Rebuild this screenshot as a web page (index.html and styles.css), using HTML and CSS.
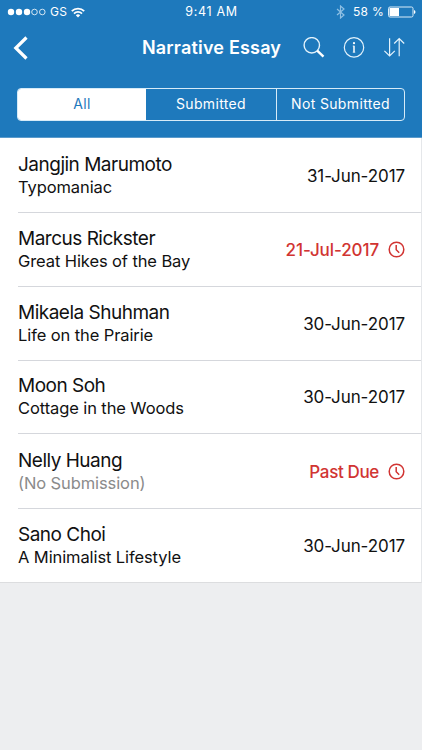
FILE: index.html
```html
<!DOCTYPE html>
<html lang="en">
<head>
<meta charset="utf-8">
<title>Narrative Essay</title>
<link rel="stylesheet" href="styles.css">
</head>
<body>
<header class="header">
  <div class="status">
    <div class="status-left">
      <svg width="40" height="8" viewBox="0 0 40 8"><g fill="#fff"><circle cx="4" cy="4" r="3.2"/><circle cx="12" cy="4" r="3.2"/><circle cx="20" cy="4" r="3.2"/></g><g fill="none" stroke="#fff" stroke-width=".8"><circle cx="27.5" cy="4" r="2.8"/><circle cx="35.3" cy="4" r="2.8"/></g></svg>
      <span class="carrier">GS</span>
      <svg width="14" height="11" viewBox="0 0 14 11"><g fill="none" stroke="#fff" stroke-width="1.8"><path d="M.8 4.1a8.8 8.8 0 0 1 12.4 0M3 6.6a5.7 5.7 0 0 1 8 0"/></g><path fill="#fff" d="M4.8 8.3a3.2 3.2 0 0 1 4.4 0L7 10.6z"/></svg>
    </div>
    <div class="time">9:41 AM</div>
    <div class="status-right">
      <svg width="9" height="14" viewBox="0 0 9 14"><path d="M1 4l7 6-3.5 3V1L8 4l-7 6" fill="none" stroke="#8fc0e4" stroke-width="1.2"/></svg>
      <span class="percent">58 %</span>
      <svg width="28" height="12" viewBox="0 0 28 12"><rect x=".5" y="1" width="24.5" height="10" rx="1.5" fill="none" stroke="#d9ecf8"/><rect x="1.5" y="2" width="9.5" height="8" fill="#fff"/><path d="M26 4q1.5 .5 1.5 2t-1.5 2z" fill="#fff"/></svg>
    </div>
  </div>
  <nav class="nav">
    <svg class="back" width="15" height="24" viewBox="0 0 15 24"><path d="M13.5 1.5L2.8 12 13.5 22.5" fill="none" stroke="#fff" stroke-width="3.2"/></svg>
    <h1 class="title">Narrative Essay</h1>
    <div class="tools">
      <svg width="22" height="22" viewBox="0 0 22 22"><circle cx="8.8" cy="8.3" r="7.7" fill="none" stroke="#e4f3fc" stroke-width="1.4"/><path d="M14.2 13.7l6.3 6" stroke="#fff" stroke-width="2.4"/></svg>
      <svg width="22" height="22" viewBox="0 0 22 22"><circle cx="11" cy="10.4" r="9.7" fill="none" stroke="#e4f3fc" stroke-width="1.2"/><circle cx="11" cy="6.2" r="1.1" fill="#fff"/><path d="M11 8.8v6.6" fill="none" stroke="#fff" stroke-width="1.5"/><path d="M9.7 9.1h1.3M9.7 15.2h2.6" stroke="#fff" stroke-width=".6"/></svg>
      <svg width="22" height="22" viewBox="0 0 22 22"><path d="M6.6 1.3v17.7M1.4 13.8l5.2 5.2 5.2-5.2M16.2 19.3V1.5M11.2 6.5l5-5 5 5" fill="none" stroke="#e4f3fc" stroke-width="1.2"/></svg>
    </div>
  </nav>
  <div class="segments">
    <span class="segment selected">All</span>
    <span class="segment submitted">Submitted</span>
    <span class="segment unsubmitted">Not Submitted</span>
  </div>
</header>
<main class="list">
  <div class="row"><div class="info"><div class="name">Jangjin Marumoto</div><div class="work">Typomaniac</div></div><div class="date">31-Jun-2017</div></div>
  <div class="row"><div class="info"><div class="name">Marcus Rickster</div><div class="work">Great Hikes of the Bay</div></div><div class="date late">21-Jul-2017<svg width="17" height="17" viewBox="0 0 17 17"><circle cx="8.5" cy="8.5" r="7.3"/><path d="M8.2 4v4.8l3 3"/></svg></div></div>
  <div class="row"><div class="info"><div class="name">Mikaela Shuhman</div><div class="work">Life on the Prairie</div></div><div class="date">30-Jun-2017</div></div>
  <div class="row short"><div class="info"><div class="name">Moon Soh</div><div class="work">Cottage in the Woods</div></div><div class="date">30-Jun-2017</div></div>
  <div class="row tall"><div class="info"><div class="name">Nelly Huang</div><div class="work none">(No Submission)</div></div><div class="date late past">Past Due<svg width="17" height="17" viewBox="0 0 17 17"><circle cx="8.5" cy="8.5" r="7.3"/><path d="M8.2 4v4.8l3 3"/></svg></div></div>
  <div class="row"><div class="info"><div class="name">Sano Choi</div><div class="work">A Minimalist Lifestyle</div></div><div class="date">30-Jun-2017</div></div>
</main>
</body>
</html>
```
FILE: styles.css
```css
* { box-sizing: border-box; }
body {
  margin: 0;
  height: 750px;
  background: #edeef0;
  color: #111;
  font-family: Inter, "Liberation Sans", sans-serif;
  overflow: hidden;
}
svg { display: block; flex: none; }
.header {
  height: 138px;
  background: #1e79bc;
  border-bottom: 1px solid #5b9bcc;
  color: #fff;
}
.status {
  display: grid;
  grid-template-columns: 1fr auto 1fr;
  align-items: center;
  height: 24px;
  padding: 0 6px 0 7px;
  font-size: 12px;
  line-height: 24px;
}
.status-left, .status-right { display: flex; align-items: center; }
.status-right { justify-content: flex-end; }
.carrier { margin: 0 4px 0 3px; letter-spacing: .2px; }
.percent { margin: 0 4px 0 8px; letter-spacing: .3px; }
.time { font-size: 12.5px; letter-spacing: .7px; }
.nav {
  display: flex;
  align-items: center;
  height: 46px;
  padding: 1px 17px 0 13px;
}
.title {
  margin: 0 0 0 114px;
  font-size: 18px;
  font-weight: 600;
  line-height: 24px;
  letter-spacing: .18px;
  white-space: nowrap;
}
.tools { display: flex; gap: 18px; margin-left: auto; }
.segments {
  display: grid;
  grid-template-columns: 128px 131px 1fr;
  height: 33px;
  margin: 18px 17px 0;
  border: 1px solid #d6ebf8;
  border-radius: 4px;
  overflow: hidden;
  font-size: 14px;
  line-height: 30px;
  text-align: center;
}
.selected { background: #fff; color: #1e79bc; }
.submitted { border-right: 1px solid #d6ebf8; }
.segment { letter-spacing: .35px; }
.list {
  background: #fff;
  border-bottom: 1px solid #dcdddf;
  border-right: 1px solid #e5e7ea;
}
.row {
  display: flex;
  justify-content: space-between;
  height: 74px;
  margin-left: 18px;
  padding: 14px 16px 0 0;
  border-bottom: 1px solid #d5d7dc;
}
.row:first-child { height: 75px; padding-top: 15px; }
.row:last-child { border-bottom: 0; height: 73px; }
.short { height: 73px; padding-top: 13px; }
.tall { height: 75px; padding-top: 15px; }
.name { font-size: 19px; line-height: 24px; letter-spacing: -.5px; }
.work { font-size: 16.5px; line-height: 20px; letter-spacing: -.1px; }
.none { color: #8b8b8b; }
.date {
  display: flex;
  align-items: center;
  height: 45px;
  font-size: 17px;
  letter-spacing: -.1px;
}
.late { color: #d13432; font-weight: 500; }
.past { letter-spacing: -.35px; }
.late svg {
  margin-left: 9px;
  fill: none;
  stroke: #d13432;
  stroke-width: 1.5;
}
```
